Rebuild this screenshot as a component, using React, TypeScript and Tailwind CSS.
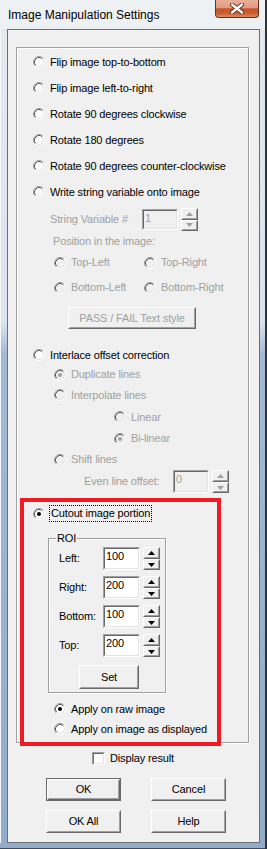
import React from 'react';

function Radio({ checked = false, disabled = false }: { checked?: boolean; disabled?: boolean }) {
  return (
    <svg width="12" height="12" viewBox="0 0 12 12" className="shrink-0">
      <circle cx="6" cy="6" r="4.5" fill={disabled ? '#f0f0f0' : '#ffffff'} />
      <path d="M2.11 9.89 A5.5 5.5 0 0 1 9.89 2.11" fill="none" stroke="#a0a0a0" strokeWidth="1" />
      <path d="M9.89 2.11 A5.5 5.5 0 0 1 2.11 9.89" fill="none" stroke="#ffffff" strokeWidth="1" />
      <path d="M2.82 9.18 A4.5 4.5 0 0 1 9.18 2.82" fill="none" stroke="#555555" strokeWidth="1" />
      <path d="M9.18 2.82 A4.5 4.5 0 0 1 2.82 9.18" fill="none" stroke="#e3e3e3" strokeWidth="1" />
      {checked && <circle cx="6" cy="6" r="2" fill={disabled ? '#a0a0a0' : '#000000'} />}
    </svg>
  );
}

function Btn({
  children,
  className,
  disabled = false,
  isDefault = false,
}: {
  children: React.ReactNode;
  className: string;
  disabled?: boolean;
  isDefault?: boolean;
}) {
  const body = (
    <div className="flex-1 flex border border-t-white border-l-white border-r-[#696969] border-b-[#696969]">
      <div
        className={
          'flex-1 flex items-center justify-center border border-t-[#f0f0f0] border-l-[#f0f0f0] border-r-[#a0a0a0] border-b-[#a0a0a0] ' +
          (disabled ? 'text-[#a0a0a0]' : 'text-black')
        }
      >
        {children}
      </div>
    </div>
  );
  if (isDefault) {
    return <div className={'flex border border-[#696969] ' + className}>{body}</div>;
  }
  return <div className={'flex ' + className}>{body}</div>;
}

function Arrow({ up, disabled }: { up: boolean; disabled: boolean }) {
  return (
    <svg width="7" height="4" viewBox="0 0 7 4">
      <polygon points={up ? '3.5,0 7,4 0,4' : '0,0 7,0 3.5,4'} fill={disabled ? '#a0a0a0' : '#000000'} />
    </svg>
  );
}

function SpinHalf({ up, disabled, className }: { up: boolean; disabled: boolean; className: string }) {
  return (
    <div className={'flex border border-t-white border-l-white border-r-[#696969] border-b-[#696969] ' + className}>
      <div className="flex-1 flex items-center justify-center border border-t-[#f0f0f0] border-l-[#f0f0f0] border-r-[#a0a0a0] border-b-[#a0a0a0]">
        <Arrow up={up} disabled={disabled} />
      </div>
    </div>
  );
}

function Spin({ value, disabled = false, inputClass }: { value: string; disabled?: boolean; inputClass: string }) {
  return (
    <div className="flex items-center gap-[3px]">
      <div className={'flex border border-t-[#a0a0a0] border-l-[#a0a0a0] border-r-white border-b-white ' + inputClass}>
        <div
          className={
            'flex-1 border border-t-[#696969] border-l-[#696969] border-r-[#e3e3e3] border-b-[#e3e3e3] pl-[1px] pt-[1px] ' +
            (disabled ? 'bg-[#f0f0f0] text-[#a0a0a0]' : 'bg-white text-black')
          }
        >
          {value}
        </div>
      </div>
      <div className="flex flex-col w-[17px] h-[23px]">
        <SpinHalf up={true} disabled={disabled} className="h-[12px]" />
        <SpinHalf up={false} disabled={disabled} className="h-[11px]" />
      </div>
    </div>
  );
}

function RadioRow({
  label,
  checked = false,
  disabled = false,
  className,
}: {
  label: string;
  checked?: boolean;
  disabled?: boolean;
  className: string;
}) {
  return (
    <div className={'flex items-center gap-[5px] ' + className}>
      <Radio checked={checked} disabled={disabled} />
      <span className={disabled ? 'text-[#a0a0a0]' : 'text-black'}>{label}</span>
    </div>
  );
}

function RoiRow({ label, value }: { label: string; value: string }) {
  return (
    <div className="flex items-center h-[29px] pl-[10px]">
      <span className="w-[44px] text-black">{label}</span>
      <Spin value={value} inputClass="w-[37px] h-[23px]" />
    </div>
  );
}

export default function App() {
  return (
    <div className="relative w-[267px] h-[849px] flex flex-col bg-[#eef1f4] border-r-2 border-[#2f3338] font-['Liberation_Sans',Arial,sans-serif] text-[11px] leading-[13px] tracking-[-0.15px] text-black overflow-hidden">
      {/* Title bar */}
      <div className="h-[29px] flex items-start shrink-0">
        <div className="pl-[8px] pt-[8px] text-[12px] leading-[14px] tracking-normal text-black">Image Manipulation Settings</div>
        <div className="ml-auto mr-[6px] w-[44px] h-[18px] rounded-b-[4px] border border-t-0 border-[#6e2f1a] bg-[linear-gradient(to_bottom,#eab09a_0%,#e19c82_45%,#c4542a_52%,#c95f33_78%,#dc8a68_100%)] flex items-center justify-center">
          <svg width="16" height="11" viewBox="0 0 16 11">
            <path d="M3 1.5 L13 9.5 M13 1.5 L3 9.5" stroke="#5a2a1a" strokeWidth="4.2" strokeLinecap="round" fill="none" />
            <path d="M3 1.5 L13 9.5 M13 1.5 L3 9.5" stroke="#ffffff" strokeWidth="2.4" strokeLinecap="round" fill="none" />
          </svg>
        </div>
      </div>

      {/* Middle */}
      <div className="flex h-[814px] shrink-0">
        <div className="w-[7px] bg-[linear-gradient(to_bottom,#e4e9f0_0%,#dbe3ec_36%,#a3b9d4_40%,#93acca_100%)] border-l border-[#f6f8fa]"></div>
        <div className="w-[253px] h-[814px] border border-[#6b6e73] bg-[#f0f0f0] flex flex-col">
          {/* Group box */}
          <div className="ml-[8px] mt-[17px] w-[233px] border border-[#a0a0a0] shadow-[1px_1px_0_#ffffff,inset_1px_1px_0_#ffffff] flex flex-col pt-[1px] pb-[3px]">
            <RadioRow label="Flip image top-to-bottom" className="h-[26px] pl-[16px]" />
            <RadioRow label="Flip image left-to-right" className="h-[26px] pl-[16px]" />
            <RadioRow label="Rotate 90 degrees clockwise" className="h-[26px] pl-[16px]" />
            <RadioRow label="Rotate 180 degrees" className="h-[26px] pl-[16px]" />
            <RadioRow label="Rotate 90 degrees counter-clockwise" className="h-[26px] pl-[16px]" />
            <RadioRow label="Write string variable onto image" className="h-[26px] pl-[16px]" />

            <div className="flex items-center h-[28px] pl-[33px]">
              <span className="w-[92px] text-[#a0a0a0]">String Variable #</span>
              <Spin value="1" disabled={true} inputClass="w-[36px] h-[21px]" />
            </div>
            <div className="flex items-center h-[17px] pl-[36px] text-[#a0a0a0]">Position in the image:</div>
            <div className="flex items-center h-[25px] pl-[37px]">
              <RadioRow label="Top-Left" disabled={true} className="w-[90px]" />
              <RadioRow label="Top-Right" disabled={true} className="" />
            </div>
            <div className="flex items-center h-[25px] pl-[37px]">
              <RadioRow label="Bottom-Left" disabled={true} className="w-[90px]" />
              <RadioRow label="Bottom-Right" disabled={true} className="" />
            </div>
            <div className="mt-[7px] pl-[51px] flex">
              <Btn disabled={true} className="w-[128px] h-[22px]">PASS / FAIL Text style</Btn>
            </div>

            <RadioRow label="Interlace offset correction" className="mt-[16px] h-[20px] pl-[16px]" />
            <RadioRow label="Duplicate lines" checked={true} disabled={true} className="h-[19px] pl-[37px]" />
            <RadioRow label="Interpolate lines" disabled={true} className="h-[22px] pl-[37px]" />
            <RadioRow label="Linear" disabled={true} className="h-[22px] pl-[97px]" />
            <RadioRow label="Bi-linear" checked={true} disabled={true} className="h-[21px] pl-[97px]" />
            <RadioRow label="Shift lines" disabled={true} className="h-[21px] pl-[37px]" />
            <div className="flex items-center h-[23px] pl-[67px]">
              <span className="w-[89px] text-[#a0a0a0]">Even line offset:</span>
              <Spin value="0" disabled={true} inputClass="w-[36px] h-[23px]" />
            </div>

            <div className="mt-[10px] h-[21px] flex items-center pl-[16px] gap-[4px]">
              <Radio checked={true} />
              <span className="h-[17px] px-[1px] flex items-center border border-dotted border-black">Cutout image portion</span>
            </div>

            {/* ROI group */}
            <div className="relative mt-[14px] ml-[31px] w-[118px] border border-[#a0a0a0] shadow-[1px_1px_0_#ffffff,inset_1px_1px_0_#ffffff] flex flex-col pt-[5px] pb-[3px]">
              <span className="absolute -top-[7px] left-[7px] px-[1px] bg-[#f0f0f0] leading-[13px]">ROI</span>
              <RoiRow label="Left:" value="100" />
              <RoiRow label="Right:" value="200" />
              <RoiRow label="Bottom:" value="100" />
              <RoiRow label="Top:" value="200" />
              <div className="mt-[5px] pl-[30px] flex">
                <Btn className="w-[60px] h-[24px]">Set</Btn>
              </div>
            </div>

            <RadioRow label="Apply on raw image" checked={true} className="mt-[6px] h-[20px] pl-[37px]" />
            <RadioRow label="Apply on image as displayed" className="h-[20px] pl-[37px]" />
          </div>

          {/* Display result */}
          <div className="mt-[6px] h-[18px] flex items-center pl-[84px] gap-[5px]">
            <div className="w-[13px] h-[13px] flex border border-t-[#a0a0a0] border-l-[#a0a0a0] border-r-white border-b-white">
              <div className="flex-1 bg-white border border-t-[#696969] border-l-[#696969] border-r-[#e3e3e3] border-b-[#e3e3e3]"></div>
            </div>
            <span>Display result</span>
          </div>

          <div className="mt-[11px] pl-[38px] flex gap-[30px]">
            <Btn isDefault={true} className="w-[75px] h-[23px]">OK</Btn>
            <Btn className="w-[75px] h-[23px]">Cancel</Btn>
          </div>
          <div className="mt-[9px] pl-[38px] flex gap-[30px]">
            <Btn className="w-[75px] h-[23px]">OK All</Btn>
            <Btn className="w-[75px] h-[23px]">Help</Btn>
          </div>
        </div>
        <div className="w-[5px] bg-[linear-gradient(to_bottom,#e4e9f0_0%,#dbe3ec_36%,#a3b9d4_40%,#93acca_100%)]"></div>
      </div>

      {/* Bottom frame */}
      <div className="h-[6px] shrink-0 bg-[#93acca] border-b border-[#3d4c5e]"></div>

      {/* Red annotation box */}
      <div className="absolute left-[20px] top-[498px] w-[201px] h-[248px] border-[4px] border-[#ed1c24] pointer-events-none"></div>
    </div>
  );
}
